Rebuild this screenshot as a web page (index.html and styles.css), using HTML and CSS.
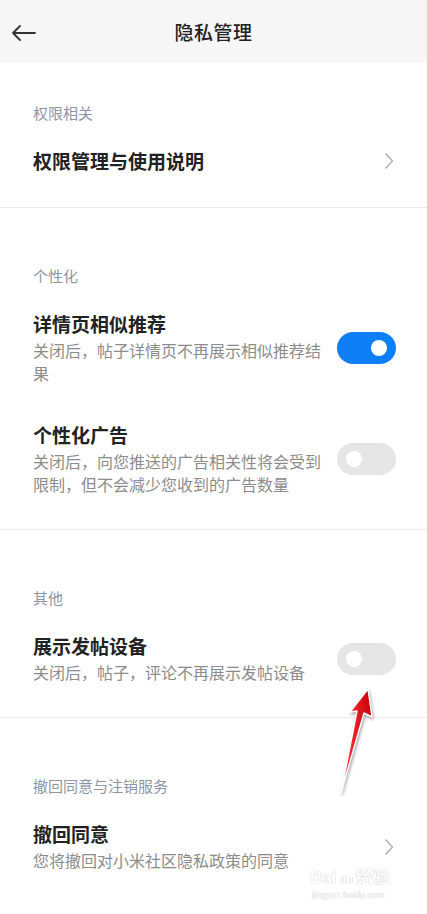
FILE: index.html
```html
<!DOCTYPE html>
<html lang="zh-CN">
<head>
  <meta charset="UTF-8" />
  <meta name="viewport" content="width=device-width, initial-scale=1.0"/>
  <title>隐私管理</title>
  <link rel="stylesheet" href="styles.css">
</head>
<body>
  <div class="page">
    <header class="topbar">
      <svg class="back" width="26" height="18" viewBox="0 0 26 18">
        <path d="M24 9H2M9 2L2 9l7 7" fill="none" stroke="#333" stroke-width="1.8" stroke-linecap="round" stroke-linejoin="round"/>
      </svg>
      <h1>隐私管理</h1>
    </header>

    <section class="group first">
      <div class="group-label">权限相关</div>
      <div class="row">
        <div class="row-text">
          <div class="row-title">权限管理与使用说明</div>
        </div>
        <svg class="chevron" width="10" height="18" viewBox="0 0 10 18"><path d="M1.5 1.5L8.5 9l-7 7.5" fill="none" stroke="#aaa" stroke-width="1.3"/></svg>
      </div>
    </section>

    <section class="group">
      <div class="group-label">个性化</div>
      <div class="row">
        <div class="row-text">
          <div class="row-title">详情页相似推荐</div>
          <div class="row-desc">关闭后，帖子详情页不再展示相似推荐结果</div>
        </div>
        <div class="switch on"><span class="knob"></span></div>
      </div>
      <div class="row">
        <div class="row-text">
          <div class="row-title">个性化广告</div>
          <div class="row-desc">关闭后，向您推送的广告相关性将会受到限制，但不会减少您收到的广告数量</div>
        </div>
        <div class="switch"><span class="knob"></span></div>
      </div>
    </section>

    <section class="group">
      <div class="group-label">其他</div>
      <div class="row">
        <div class="row-text">
          <div class="row-title">展示发帖设备</div>
          <div class="row-desc">关闭后，帖子，评论不再展示发帖设备</div>
        </div>
        <div class="switch"><span class="knob"></span></div>
      </div>
    </section>

    <section class="group last">
      <div class="group-label">撤回同意与注销服务</div>
      <div class="row">
        <div class="row-text">
          <div class="row-title">撤回同意</div>
          <div class="row-desc">您将撤回对小米社区隐私政策的同意</div>
        </div>
        <svg class="chevron" width="10" height="18" viewBox="0 0 10 18"><path d="M1.5 1.5L8.5 9l-7 7.5" fill="none" stroke="#aaa" stroke-width="1.3"/></svg>
      </div>
    </section>

    <!-- annotation arrow drawn over the screenshot -->
    <svg class="pointer" width="427" height="914" viewBox="0 0 427 914">
      <defs>
        <linearGradient id="red" x1="0" y1="0" x2="1" y2="0">
          <stop offset="0" stop-color="#ff3a3a"/>
          <stop offset="1" stop-color="#c80008"/>
        </linearGradient>
      </defs>
      <polygon points="368,689 372,717 364,713 341,793 357,711 350,712" fill="url(#red)" stroke="#fff" stroke-width="1.4" stroke-linejoin="round" class="pointer-shape"/>
    </svg>

    <div class="watermark">
      <div class="wm-logo">Bai<span class="wm-du">du</span>经验</div>
      <div class="wm-url">jingyan.baidu.com</div>
    </div>
  </div>
</body>
</html>
```

FILE: styles.css
```css
body { margin: 0; background: #fff; font-family: "Noto Sans CJK SC", "Noto Sans", sans-serif; color: #222; }
.page { position: relative; width: 427px; min-height: 914px; overflow: hidden; }

.topbar { height: 63px; background: #f6f6f6; display: flex; align-items: center; justify-content: center; position: relative; }
.topbar h1 { margin: 0; font-size: 19px; font-weight: 500; color: #222; letter-spacing: 0.5px; }
.back { position: absolute; left: 11px; top: 24px; }

.group { padding: 58px 31px 33px 33px; border-bottom: 1px solid #ededed; }
.group.first { padding-top: 40px; }
.group.last { border-bottom: none; }
.group-label { font-size: 15px; line-height: 20px; color: #8d95a5; margin-bottom: 25px; }

.row { display: flex; align-items: center; justify-content: space-between; }
.row + .row { margin-top: 37px; }
.row-text { width: 298px; }
.row-title { font-size: 19px; line-height: 26px; font-weight: 600; color: #222; }
.row-desc { font-size: 16px; line-height: 23px; color: #8c8c8c; margin-top: 2px; }
.chevron { margin-right: 2px; }

.switch { width: 59px; height: 32px; border-radius: 16px; background: #e6e6e6; position: relative; flex-shrink: 0; }
.switch .knob { position: absolute; top: 8px; left: 9px; width: 16px; height: 16px; border-radius: 50%; background: #fff; }
.switch.on { background: #0f7ff5; }
.switch.on .knob { left: auto; right: 9px; }

.pointer { position: absolute; left: 0; top: 0; pointer-events: none; }
.pointer-shape { filter: drop-shadow(1px 2px 1.5px rgba(0,0,0,0.35)); }

.watermark { position: absolute; left: 310px; top: 868px; color: #fff; text-shadow: 0 0 1px #bbb, 0 0 1px #bbb; font-family: "Liberation Sans", "Noto Sans CJK SC", sans-serif; opacity: 0.8; }
.wm-logo { font-size: 17px; font-weight: bold; line-height: 20px; }
.wm-du { font-size: 11px; margin: 0 3px; }
.wm-url { font-size: 9px; line-height: 12px; margin-left: 2px; }
```
